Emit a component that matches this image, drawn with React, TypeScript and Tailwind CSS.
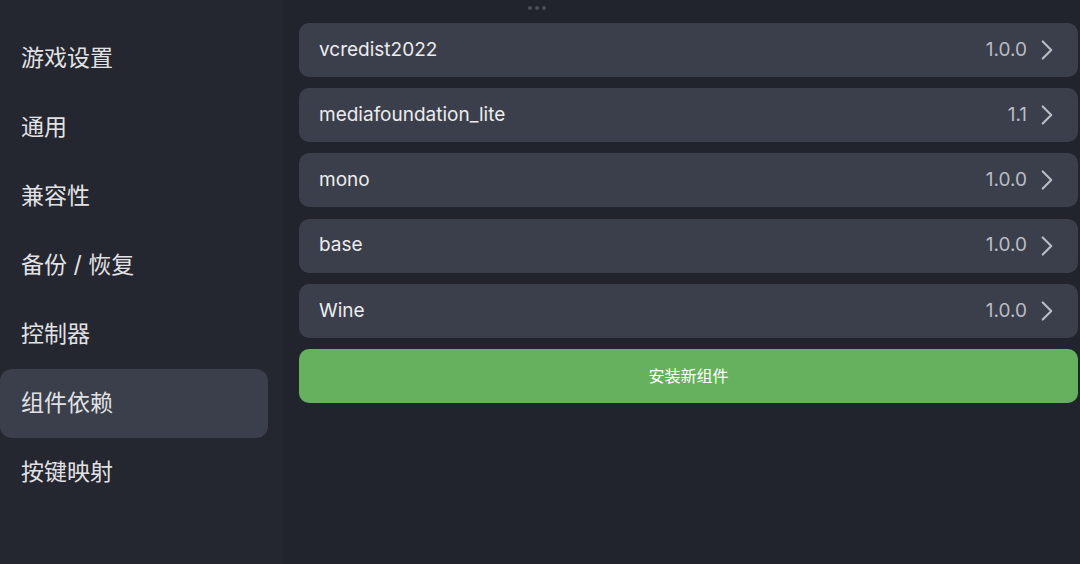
import { ChevronRight } from "lucide-react";

const menu = ["游戏设置", "通用", "兼容性", "备份 / 恢复", "控制器", "组件依赖", "按键映射"];

const components = [
    { name: "vcredist2022", version: "1.0.0" },
    { name: "mediafoundation_lite", version: "1.1" },
    { name: "mono", version: "1.0.0" },
    { name: "base", version: "1.0.0" },
    { name: "Wine", version: "1.0.0" },
];

const font = { fontFamily: 'Inter, "Noto Sans CJK SC", sans-serif' };

export default function App() {
    return (
        <div className="relative flex h-[564px] w-[1080px] overflow-hidden bg-[#21232d]" style={font}>
            {/* drag handle */}
            <div className="absolute left-[528px] top-[6px] flex gap-[3px]">
                <div className="h-[4px] w-[4px] rounded-full bg-[#4b4e58]"></div>
                <div className="h-[4px] w-[4px] rounded-full bg-[#4b4e58]"></div>
                <div className="h-[4px] w-[4px] rounded-full bg-[#4b4e58]"></div>
            </div>

            <aside className="w-[283px] shrink-0 bg-[#242630] pt-[24px]">
                {menu.map((item, index) => (
                    <div
                        key={index}
                        className={`flex h-[69px] w-[268px] items-center rounded-[12px] pl-[21px] text-[23px] text-[#e2e2e4] ${index === 5 ? "bg-[#3b3f4b]" : ""}`}
                    >
                        {item}
                    </div>
                ))}
            </aside>

            <main className="flex flex-1 flex-col gap-[11.2px] pl-[16px] pr-[2px] pt-[23px]">
                {components.map((c, index) => (
                    <div
                        key={index}
                        className="flex h-[54px] items-center justify-between rounded-[10px] bg-[#3b3f4b] pl-[20px] pr-[14px]"
                    >
                        <span className="text-[19px] text-[#ececee]">{c.name}</span>
                        <div className="flex items-center gap-[3px]">
                            <span className="text-[19px] text-[#b9bcc3]">{c.version}</span>
                            <ChevronRight className="h-[34px] w-[34px] text-[#b9bcc3]" strokeWidth={1.5} />
                        </div>
                    </div>
                ))}
                <button className="flex h-[54px] items-center justify-center rounded-[10px] bg-[#66b15d] text-[16px] text-white">
                    安装新组件
                </button>
            </main>
        </div>
    );
}
